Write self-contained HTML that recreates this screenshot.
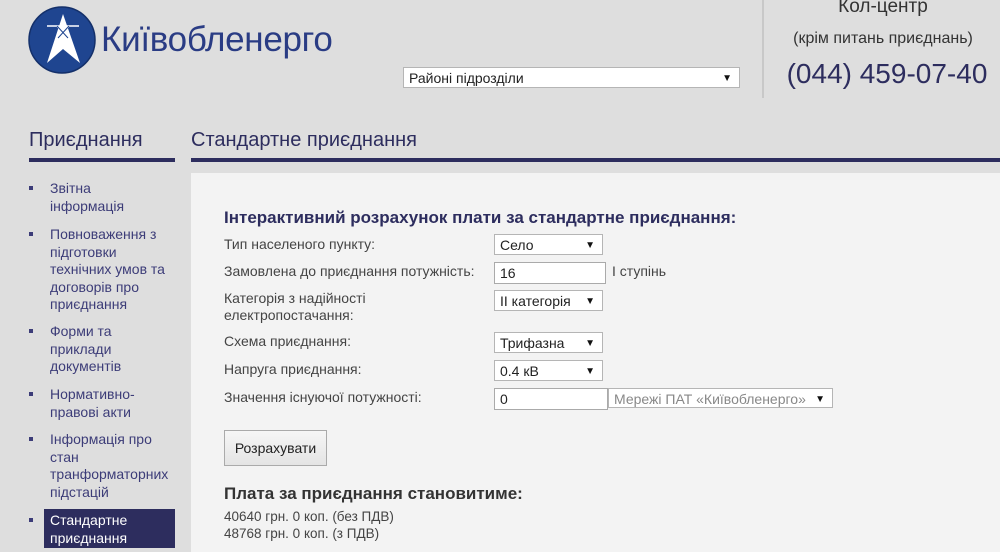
<!DOCTYPE html>
<html><head><meta charset="utf-8"><style>
*{margin:0;padding:0;box-sizing:border-box}
body{width:1000px;height:552px;overflow:hidden;background:#dedede;font-family:"Liberation Sans",Arial,sans-serif;position:relative}
.a{position:absolute;white-space:nowrap}
.sel,.inp{position:absolute;background:#fff;border:1px solid #b5b5b5;font-size:14px;color:#222;padding:2px 5px;line-height:16px}
.sel:after{content:"▼";position:absolute;right:7px;top:3px;font-size:10px;color:#111}
.side{position:absolute;left:50px;font-size:14px;line-height:17.5px;color:#3c3c78}
.b{position:absolute;left:29px;width:4px;height:4px;background:#3c3c78}
.lbl{position:absolute;left:224px;font-size:14px;color:#444;line-height:17px}
</style></head><body>
<svg class="a" style="left:27px;top:5px" width="72" height="72" viewBox="0 0 72 72">
<circle cx="35" cy="35" r="33" fill="#1f4590" stroke="#14306a" stroke-width="1.5"/>
<path d="M36 9 L20 58 L36 44 L53 58 Z" fill="#fff"/>
<path d="M20 21 H52 M30 21 L41 33 M42 21 L31 33" stroke="#fff" stroke-width="1.6" fill="none"/>
<path d="M30 21 L41 33 M42 21 L31 33" stroke="#1f4590" stroke-width="1" fill="none"/>
</svg>
<div class="a" style="left:101px;top:20px;font-size:35px;color:#2a3c84;letter-spacing:-0.3px">Київобленерго</div>
<div class="sel" style="left:403px;top:67px;width:337px;height:21px">Районі підрозділи</div>
<div class="a" style="left:762px;top:0;width:2px;height:98px;background:#c8c8c8"></div>
<div class="a" style="left:770px;top:-4px;width:226px;text-align:center;font-size:19px;color:#333">Кол-центр</div>
<div class="a" style="left:770px;top:30px;width:226px;text-align:center;font-size:16px;color:#333">(крім питань приєднань)</div>
<div class="a" style="left:770px;top:58px;width:234px;text-align:center;font-size:28px;color:#2d2d5e">(044) 459-07-40</div>

<div class="a" style="left:29px;top:129px;font-size:20px;color:#2d2d5e">Приєднання</div>
<div class="a" style="left:29px;top:158px;width:146px;height:4px;background:#2d2d5e"></div>
<div class="a" style="left:191px;top:129px;font-size:20px;color:#2d2d5e">Стандартне приєднання</div>
<div class="a" style="left:191px;top:158px;width:809px;height:4px;background:#2d2d5e"></div>

<div class="b" style="top:186px"></div><div class="side" style="top:180px">Звітна<br>інформація</div>
<div class="b" style="top:232px"></div><div class="side" style="top:226px">Повноваження з<br>підготовки<br>технічних умов та<br>договорів про<br>приєднання</div>
<div class="b" style="top:329px"></div><div class="side" style="top:323px">Форми та<br>приклади<br>документів</div>
<div class="b" style="top:392px"></div><div class="side" style="top:386px">Нормативно-<br>правові акти</div>
<div class="b" style="top:437px"></div><div class="side" style="top:431px">Інформація про<br>стан<br>транформаторних<br>підстацій</div>
<div class="b" style="top:518px"></div>
<div class="a" style="left:44px;top:509px;width:131px;height:39px;background:#2d2d5e"></div>
<div class="side" style="top:512px;color:#fff">Стандартне<br>приєднання</div>

<div class="a" style="left:191px;top:173px;width:809px;height:379px;background:#f3f3f3"></div>
<div class="a" style="left:224px;top:208px;font-size:17px;font-weight:bold;color:#2d2d5e">Інтерактивний розрахунок плати за стандартне приєднання:</div>
<div class="lbl" style="top:236px">Тип населеного пункту:</div>
<div class="lbl" style="top:263px">Замовлена до приєднання потужність:</div>
<div class="lbl" style="top:290px">Категорія з надійності<br>електропостачання:</div>
<div class="lbl" style="top:333px">Схема приєднання:</div>
<div class="lbl" style="top:361px">Напруга приєднання:</div>
<div class="lbl" style="top:389px">Значення існуючої потужності:</div>
<div class="sel" style="left:494px;top:234px;width:109px;height:21px">Село</div>
<div class="inp" style="left:494px;top:262px;width:112px;height:22px;border-color:#aaa">16</div>
<div class="a" style="left:612px;top:263px;font-size:14px;color:#444">І ступінь</div>
<div class="sel" style="left:494px;top:290px;width:109px;height:21px">ІІ категорія</div>
<div class="sel" style="left:494px;top:332px;width:109px;height:21px">Трифазна</div>
<div class="sel" style="left:494px;top:360px;width:109px;height:21px">0.4 кВ</div>
<div class="inp" style="left:494px;top:388px;width:114px;height:22px;border-color:#aaa">0</div>
<div class="sel" style="left:608px;top:388px;width:225px;height:20px;color:#888">Мережі ПАТ «Київобленерго»</div>
<div class="a" style="left:224px;top:430px;width:103px;height:36px;border:1px solid #aaa;background:linear-gradient(#f6f6f6,#e4e4e4);font-size:14px;color:#222;text-align:center;line-height:34px">Розрахувати</div>
<div class="a" style="left:224px;top:484px;font-size:17px;font-weight:bold;color:#333">Плата за приєднання становитиме:</div>
<div class="a" style="left:224px;top:508px;font-size:13.5px;color:#444;line-height:17px">40640 грн. 0 коп. (без ПДВ)<br>48768 грн. 0 коп. (з ПДВ)</div>
</body></html>
